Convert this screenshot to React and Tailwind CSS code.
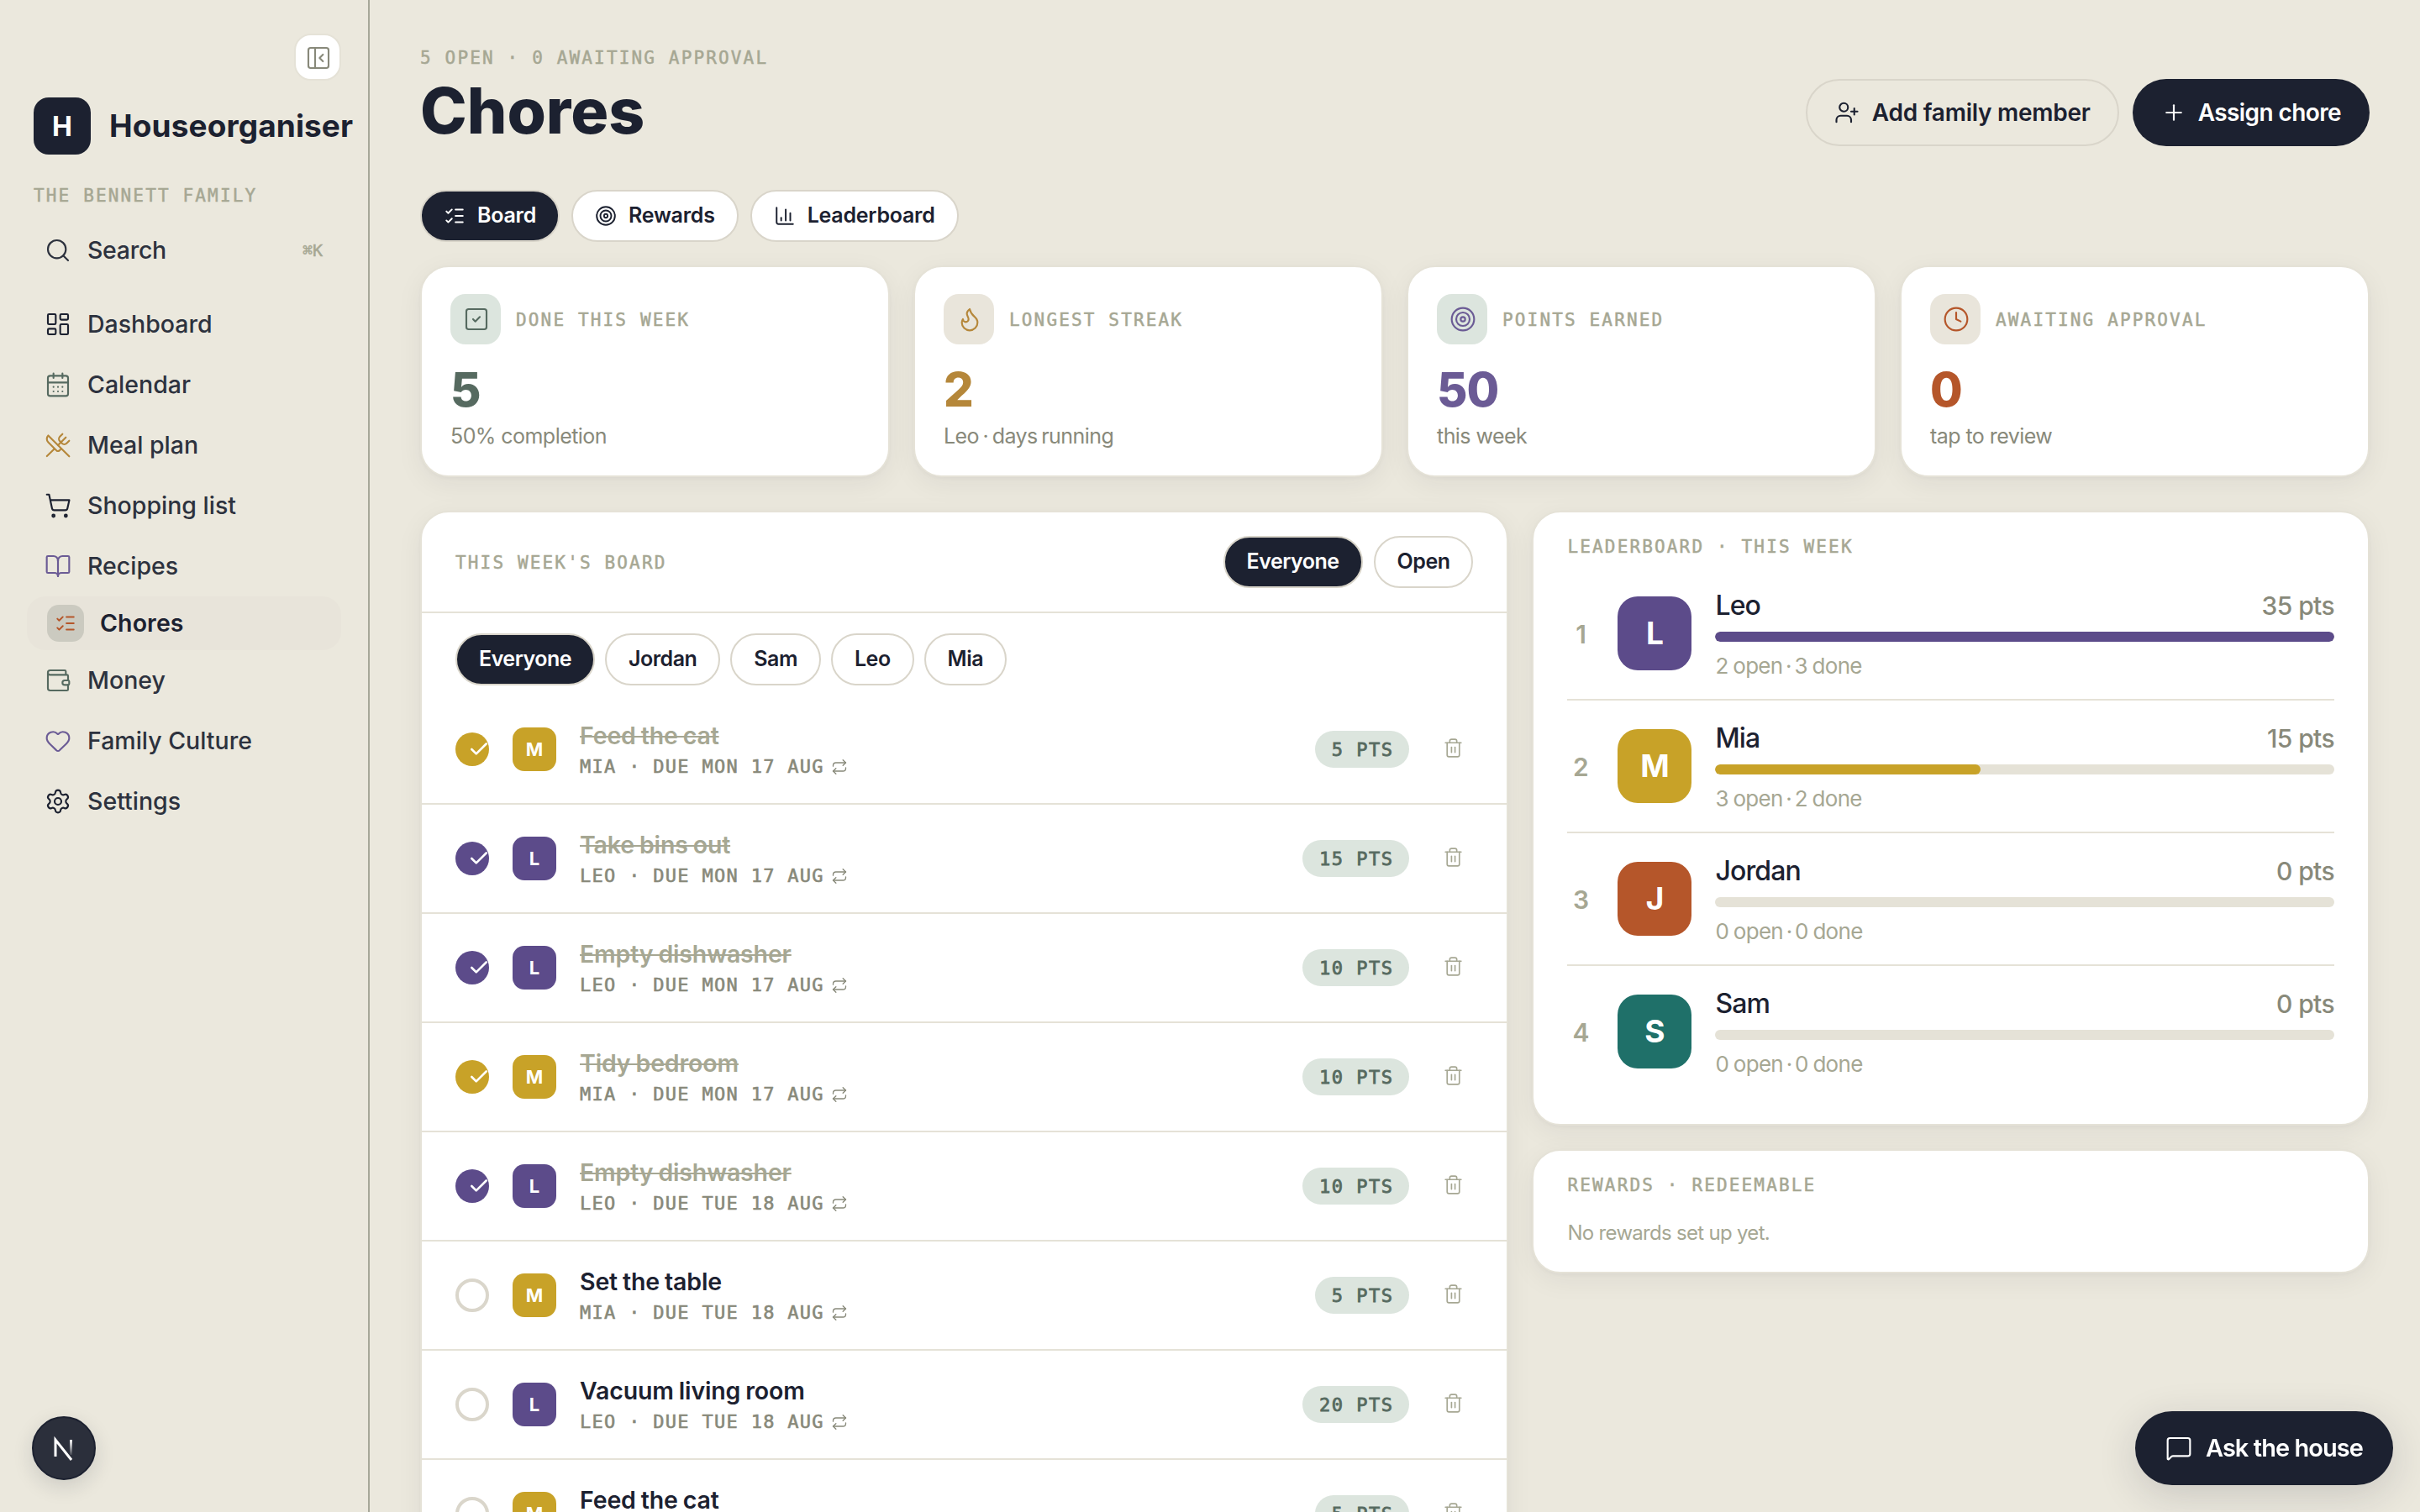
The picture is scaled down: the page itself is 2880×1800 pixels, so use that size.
import {
  BookOpen,
  CalendarDays,
  ChartColumn,
  Check,
  Clock,
  Flame,
  Heart,
  LayoutDashboard,
  ListChecks,
  MessageSquare,
  PanelLeftClose,
  Plus,
  Repeat,
  Search,
  Settings,
  ShoppingCart,
  SquareCheck,
  Target,
  Trash2,
  UserPlus,
  UtensilsCrossed,
  Wallet,
} from 'lucide-react'

const nav = [
  { label: 'Dashboard', icon: LayoutDashboard, color: 'text-[#1c2130]' },
  { label: 'Calendar', icon: CalendarDays, color: 'text-[#566a60]' },
  { label: 'Meal plan', icon: UtensilsCrossed, color: 'text-[#b5873a]' },
  { label: 'Shopping list', icon: ShoppingCart, color: 'text-[#1c2130]' },
  { label: 'Recipes', icon: BookOpen, color: 'text-[#6b5b95]' },
  { label: 'Chores', icon: ListChecks, color: 'text-[#b5562a]', active: true },
  { label: 'Money', icon: Wallet, color: 'text-[#566a60]' },
  { label: 'Family Culture', icon: Heart, color: 'text-[#6b5b95]' },
  { label: 'Settings', icon: Settings, color: 'text-[#1c2130]' },
]

const tabs = [
  { label: 'Board', icon: ListChecks, active: true },
  { label: 'Rewards', icon: Target },
  { label: 'Leaderboard', icon: ChartColumn },
]

const stats = [
  { label: 'Done this week', value: '5', sub: '50% completion', icon: SquareCheck, color: 'text-[#566a60]', tile: 'bg-[#dce5de]' },
  { label: 'Longest streak', value: '2', sub: 'Leo · days running', tight: true, icon: Flame, color: 'text-[#b5873a]', tile: 'bg-[#e9e5db]' },
  { label: 'Points earned', value: '50', sub: 'this week', icon: Target, color: 'text-[#6b5b95]', tile: 'bg-[#dce5de]' },
  { label: 'Awaiting approval', value: '0', sub: 'tap to review', icon: Clock, color: 'text-[#b5562a]', tile: 'bg-[#e9e5db]' },
]

const members = {
  Leo: 'bg-[#5c4b8a]',
  Mia: 'bg-[#c8a228]',
  Jordan: 'bg-[#b5562a]',
  Sam: 'bg-[#1f7069]',
}

const chores = [
  { title: 'Feed the cat', who: 'Mia', due: 'Mon 17 Aug', pts: 5, done: true },
  { title: 'Take bins out', who: 'Leo', due: 'Mon 17 Aug', pts: 15, done: true },
  { title: 'Empty dishwasher', who: 'Leo', due: 'Mon 17 Aug', pts: 10, done: true },
  { title: 'Tidy bedroom', who: 'Mia', due: 'Mon 17 Aug', pts: 10, done: true },
  { title: 'Empty dishwasher', who: 'Leo', due: 'Tue 18 Aug', pts: 10, done: true },
  { title: 'Set the table', who: 'Mia', due: 'Tue 18 Aug', pts: 5 },
  { title: 'Vacuum living room', who: 'Leo', due: 'Tue 18 Aug', pts: 20 },
  { title: 'Feed the cat', who: 'Mia', due: 'Wed 19 Aug', pts: 5 },
]

const leaders = [
  { name: 'Leo', pts: 35, open: 2, done: 3 },
  { name: 'Mia', pts: 15, open: 3, done: 2 },
  { name: 'Jordan', pts: 0, open: 0, done: 0 },
  { name: 'Sam', pts: 0, open: 0, done: 0 },
]

function Label({ children, className = '' }) {
  return (
    <div
      className={`translate-y-px font-['DejaVu_Sans_Mono','Liberation_Mono',monospace] text-[21px] leading-7 tracking-[2.15px] uppercase whitespace-nowrap text-[#a6a793] [-webkit-text-stroke:0.5px] ${className}`}
    >
      {children}
    </div>
  )
}

function Card({ children, className = '' }) {
  return (
    <div
      className={`rounded-[34px] border-2 border-[#e5e2d7] bg-white shadow-[0_2px_4px_rgba(28,33,48,0.03),0_8px_32px_rgba(28,33,48,0.06)] ${className}`}
    >
      {children}
    </div>
  )
}

function Pill({ children, active, className = 'tracking-[-0.5px]' }) {
  return (
    <button
      className={`flex h-[62px] items-center gap-3.5 rounded-full border-2 border-[#d9d5ca] px-[26px] text-[25px] font-semibold whitespace-nowrap ${active ? 'bg-[#1c2130] text-white' : 'bg-white text-[#1c2130]'} ${className}`}
    >
      {children}
    </button>
  )
}

function NavItem({ item }) {
  const Icon = item.icon
  if (item.active) {
    return (
      <a className="flex h-16 items-center gap-[19px] rounded-[22px] bg-[#e8e4da] pl-6">
        <span className="flex size-11 items-center justify-center rounded-[14px] bg-[#cbcac0]">
          <Icon size={26} strokeWidth={1.8} className={item.color} />
        </span>
        <span className="text-[28.5px] font-semibold tracking-[0.1px] text-[#1c2130]">{item.label}</span>
      </a>
    )
  }
  return (
    <a className="flex h-[72px] items-center gap-[19px] pl-[21px]">
      <Icon size={32} strokeWidth={1.6} className={item.color} />
      <span className="text-[28.5px] font-medium whitespace-nowrap text-[#2d323e]">{item.label}</span>
    </a>
  )
}

function Sidebar() {
  return (
    <aside className="flex w-[440px] shrink-0 flex-col border-r-2 border-[#a6a798] pt-10">
      <button className="mr-8 flex size-14 items-center justify-center self-end rounded-[20px] border-2 border-[#e5e2d7] bg-white">
        <PanelLeftClose size={32} strokeWidth={1.6} className="translate-px text-[#88897a]" />
      </button>
      <div className="mt-5 flex items-center gap-[22px] pl-10">
        <div className="flex size-[68px] shrink-0 items-center justify-center rounded-[18px] bg-[#1c2130] text-[32px] font-bold text-white">
          <span className="translate-y-px">H</span>
        </div>
        <div className="text-[37px] leading-[68px] font-bold tracking-[0.1px] text-[#1c2130]">Houseorganiser</div>
      </div>
      <Label className="mt-[34px] pl-10">The Bennett family</Label>
      <nav className="mt-4 flex flex-col pr-8 pl-8">
        <a className="mb-4 flex h-[72px] items-center gap-[19px] pr-[22px] pl-[21px]">
          <Search size={32} strokeWidth={1.6} className="text-[#2d323e]" />
          <span className="text-[28.5px] font-medium tracking-[-0.3px] text-[#2d323e]">Search</span>
          <span className="ml-auto font-['DejaVu_Sans_Mono',monospace] text-[20px] text-[#a6a793] [-webkit-text-stroke:0.5px]">⌘K</span>
        </a>
        {nav.map((item) => (
          <NavItem key={item.label} item={item} />
        ))}
      </nav>
    </aside>
  )
}

function StatCard({ stat }) {
  const Icon = stat.icon
  return (
    <Card className="flex flex-col px-[34px] pt-8 pb-[31px]">
      <div className="flex items-center gap-[18px]">
        <span className={`flex size-[60px] items-center justify-center rounded-[18px] ${stat.tile}`}>
          <Icon size={32} strokeWidth={1.6} className={`translate-x-px ${stat.color}`} />
        </span>
        <Label>{stat.label}</Label>
      </div>
      <div className={`mt-6 text-[56px] leading-[60px] font-extrabold tracking-[-1px] ${stat.color}`}>{stat.value}</div>
      <div
        className={`mt-[9px] text-[25px] leading-8 tracking-[-0.55px] text-[#88897a] ${stat.tight ? '[word-spacing:-2px]' : ''}`}
      >
        {stat.sub}
      </div>
    </Card>
  )
}

function ChoreRow({ chore }) {
  const tint = members[chore.who]
  return (
    <div className="flex h-[130px] shrink-0 items-center border-b-2 border-[#e5e2d7] px-10">
      {chore.done ? (
        <span className={`flex size-10 shrink-0 items-center justify-center rounded-full pl-4 text-white ${tint}`}>
          <Check size={26} strokeWidth={2.4} className="shrink-0" />
        </span>
      ) : (
        <span className="size-10 shrink-0 rounded-full border-4 border-[#dad6cb]" />
      )}
      <span className={`ml-7 flex size-[52px] shrink-0 items-center justify-center rounded-[14px] text-[22px] font-bold text-white ${tint}`}>
        {chore.who[0]}
      </span>
      <div className="ml-7 flex-1 pt-px">
        <div
          className={`text-[28.5px] leading-[38px] font-semibold tracking-[-0.15px] [word-spacing:-1px] whitespace-nowrap ${chore.done ? 'text-[#a6a793] line-through decoration-2' : 'text-[#1c2130]'}`}
        >
          {chore.title}
        </div>
        <div className="flex translate-y-px items-center gap-2 text-[#88897a]">
          <span className="font-['DejaVu_Sans_Mono',monospace] text-[22px] leading-[34px] tracking-[1.3px] uppercase [-webkit-text-stroke:0.6px]">
            {chore.who} · Due {chore.due}
          </span>
          <Repeat size={20} strokeWidth={1.6} />
        </div>
      </div>
      <span className="flex h-11 items-center rounded-full bg-[#dce5de] pr-[19px] pl-5 font-['DejaVu_Sans_Mono',monospace] text-[22px] tracking-[1.5px] text-[#566a60] [-webkit-text-stroke:0.8px]">
        {chore.pts} PTS
      </span>
      <button className="ml-7 flex size-12 items-center justify-center pb-1 text-[#a6a793]">
        <Trash2 size={25} strokeWidth={1.6} />
      </button>
    </div>
  )
}

function Board() {
  return (
    <Card className="overflow-hidden">
      <div className="flex h-[120px] items-center justify-between border-b-2 border-[#e5e2d7] px-10">
        <Label>This week's board</Label>
        <div className="flex gap-[13px]">
          <Pill active>Everyone</Pill>
          <Pill>Open</Pill>
        </div>
      </div>
      <div className="flex gap-3 px-10 pt-6 pb-3">
        {['Everyone', 'Jordan', 'Sam', 'Leo', 'Mia'].map((name, i) => (
          <Pill key={name} active={i === 0}>
            {name}
          </Pill>
        ))}
      </div>
      {chores.map((chore, i) => (
        <ChoreRow key={i} chore={chore} />
      ))}
    </Card>
  )
}

function Leaderboard() {
  return (
    <Card className="h-[732px] px-10 pt-[26px]">
      <Label>Leaderboard · this week</Label>
      <div className="mt-3 flex flex-col divide-y-2 divide-[#e5e2d7]">
        {leaders.map((m, i) => (
          <div key={m.name} className="flex h-[158px] items-center gap-7 last:h-[156px]">
            <span className="w-8 translate-y-px text-center text-[30px] font-semibold text-[#a6a793]">{i + 1}</span>
            <span
              className={`flex size-[88px] items-center justify-center rounded-[24px] text-[37px] font-bold text-white ${members[m.name]}`}
            >
              {m.name[0]}
            </span>
            <div className="flex-1">
              <div className="flex translate-y-px justify-between leading-10">
                <span className="text-[32px] font-medium tracking-[-0.9px] text-[#1c2130]">{m.name}</span>
                <span className="text-[30px] font-medium tracking-[-0.6px] text-[#88897a]">{m.pts} pts</span>
              </div>
              <div className="my-3 h-3 overflow-hidden rounded-full bg-[#e5e2d7]">
                <div className={`h-full rounded-full ${members[m.name]}`} style={{ width: `${(m.pts / 35) * 100}%` }} />
              </div>
              <div className="translate-y-px text-[26px] leading-8 tracking-[-0.7px] [word-spacing:-1px] text-[#a6a793]">
                {m.open} open <span className="-mx-[2px]">·</span> {m.done} done
              </div>
            </div>
          </div>
        ))}
      </div>
    </Card>
  )
}

function NextBadge() {
  return (
    <div className="fixed bottom-[38px] left-[38px] flex size-[76px] items-center justify-center rounded-full border-2 border-[#1c2130] bg-[#2b2f3b] shadow-[0_8px_24px_rgba(28,33,48,0.14)]">
      <svg width="32" height="32" viewBox="0 0 32 32" fill="none" strokeWidth="3">
        <defs>
          <linearGradient id="fade" x1="0" y1="6" x2="0" y2="24" gradientUnits="userSpaceOnUse">
            <stop stopColor="#fff" />
            <stop offset="1" stopColor="#fff" stopOpacity="0.1" />
          </linearGradient>
        </defs>
        <path d="M6 26V6L25 30" stroke="#fff" />
        <path d="M23 6h3v18h-3z" fill="url(#fade)" />
      </svg>
    </div>
  )
}

export default function App() {
  return (
    <div className="flex h-screen overflow-hidden bg-[#ebe8dd] font-[Inter,sans-serif]">
      <Sidebar />
      <main className="flex-1 px-[60px] pt-[54px]">
        <header className="flex h-[172px] justify-between">
          <div>
            <Label>5 open · 0 awaiting approval</Label>
            <h1 className="mt-2.5 text-[75px] leading-20 font-extrabold text-[#1c2130]">Chores</h1>
          </div>
          <div className="mt-10 flex gap-4">
            <button className="flex h-20 items-center gap-[15px] rounded-full border-2 border-[#d9d5ca] pr-8 pl-8 text-[28px] font-semibold tracking-[-0.25px] text-[#1c2130]">
              <UserPlus size={30} strokeWidth={1.7} />
              Add family member
            </button>
            <button className="flex h-20 items-center gap-3.5 rounded-full bg-[#1c2130] px-[34px] text-[28px] font-semibold tracking-[-0.6px] text-white">
              <Plus size={30} strokeWidth={1.7} />
              Assign chore
            </button>
          </div>
        </header>

        <div className="flex gap-3.5">
          {tabs.map(({ label, icon: Icon, active }) => (
            <Pill key={label} active={active} className="tracking-[-0.25px]">
              <Icon size={26} strokeWidth={1.8} />
              {label}
            </Pill>
          ))}
        </div>

        <div className="mt-7 grid grid-cols-4 gap-7">
          {stats.map((stat) => (
            <StatCard key={stat.label} stat={stat} />
          ))}
        </div>

        <div className="mt-10 grid grid-cols-[1.3fr_1fr] items-start gap-7">
          <Board />
          <div className="flex flex-col gap-7">
            <Leaderboard />
            <Card className="h-[148px] px-10 pt-[26px]">
              <Label>Rewards · redeemable</Label>
              <p className="mt-7 text-[24px] leading-8 tracking-[-0.7px] text-[#a6a793]">No rewards set up yet.</p>
            </Card>
          </div>
        </div>
      </main>

      <button className="fixed right-8 bottom-8 flex h-[88px] items-center gap-4 rounded-full bg-[#1c2130] px-9 text-[29px] font-semibold tracking-[-0.95px] text-white shadow-[0_12px_48px_rgba(28,33,48,0.16)]">
        <MessageSquare size={32} strokeWidth={1.6} />
        Ask the house
      </button>
      <NextBadge />
    </div>
  )
}
